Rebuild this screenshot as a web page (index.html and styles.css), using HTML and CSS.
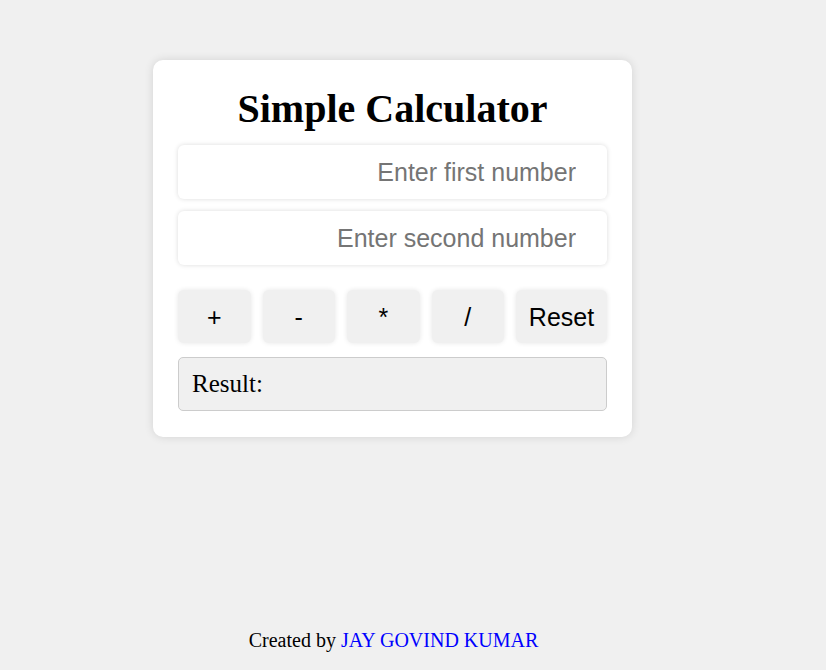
FILE: index.html
```html
<!DOCTYPE html>
<html>
<head>
<meta charset="utf-8">
<link rel="stylesheet" href="styles.css">
</head>
<body>
<div class="page">
  <main class="main">
    <div class="card">
      <h1 class="title">Simple Calculator</h1>
      <input class="field" type="text" placeholder="Enter first number">
      <input class="field" type="text" placeholder="Enter second number">
      <div class="buttons">
        <button class="btn op">+</button>
        <button class="btn op">-</button>
        <button class="btn op">*</button>
        <button class="btn op">/</button>
        <button class="btn reset">Reset</button>
      </div>
      <div class="result">Result:</div>
    </div>
  </main>
  <footer class="footer">Created by <a class="author">JAY GOVIND KUMAR</a></footer>
</div>
</body>
</html>
```
FILE: styles.css
```css
html, body {
  margin: 0;
  padding: 0;
  background: #f0f0f0;
  font-family: "Liberation Serif", "Times New Roman", serif;
}
.page {
  width: 785px;
  height: 670px;
  display: flex;
  flex-direction: column;
  align-items: center;
}
.main {
  flex: 1;
  padding-top: 60px;
}
.card {
  width: 429px;
  background: #fff;
  border-radius: 10px;
  padding: 26px 25px 26px;
  box-shadow: 0 0 10px rgba(0,0,0,0.12);
  display: flex;
  flex-direction: column;
}
.title {
  margin: 0 0 13px;
  font-size: 40px;
  line-height: 46px;
  text-align: center;
  font-weight: bold;
}
.field {
  box-sizing: border-box;
  height: 54px;
  width: 100%;
  border: none;
  border-radius: 6px;
  box-shadow: 0 0 5px rgba(0,0,0,0.14);
  margin: 0 0 12px;
  padding: 0 31px 0 10px;
  text-align: right;
  font-family: "Liberation Sans", Arial, sans-serif;
  font-size: 25px;
  outline: none;
  background: #fff;
}
.field::placeholder {
  color: #757575;
}
.buttons {
  display: flex;
  gap: 12px;
  margin-top: 13px;
}
.btn {
  height: 53px;
  border: none;
  border-radius: 6px;
  background: #f0f0f0;
  box-shadow: 0 0 5px rgba(0,0,0,0.1);
  font-family: "Liberation Sans", Arial, sans-serif;
  font-size: 25px;
  color: #000;
  padding: 2px 0 0;
}
.op {
  flex: 1;
}
.reset {
  width: 91px;
}
.result {
  box-sizing: border-box;
  margin-top: 14px;
  height: 54px;
  border: 1px solid #ccc;
  border-radius: 5px;
  background: #f0f0f0;
  padding: 0 13px;
  display: flex;
  align-items: center;
  font-size: 25px;
}
.footer {
  font-size: 20px;
  line-height: 23px;
  padding-bottom: 18px;
  padding-left: 2px;
  color: #000;
}
.author {
  color: #0000ff;
}
```
